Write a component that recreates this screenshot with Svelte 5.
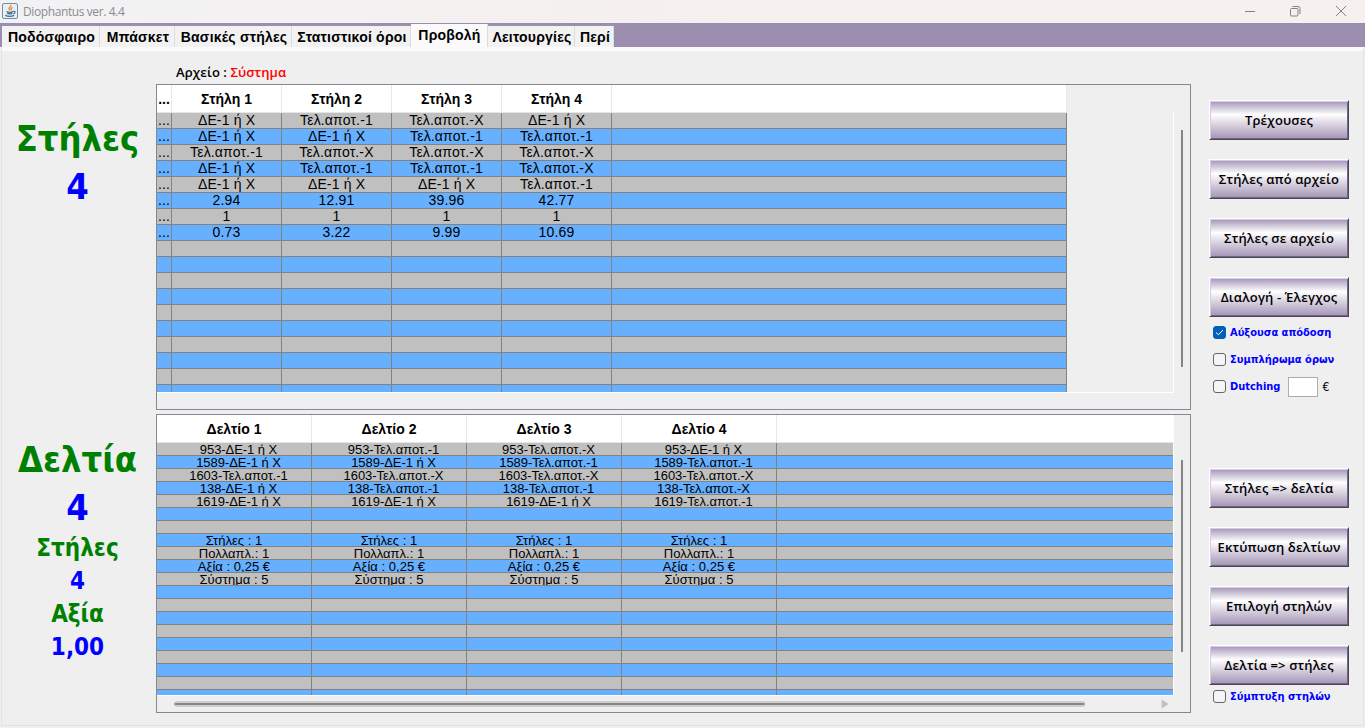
<script>
  let activeTab = 'Προβολή';
  const tabs = [
    { name: 'Ποδόσφαιρο', width: 98 },
    { name: 'Μπάσκετ', width: 75 },
    { name: 'Βασικές στήλες', width: 117 },
    { name: 'Στατιστικοί όροι', width: 119 },
    { name: 'Προβολή', width: 77 },
    { name: 'Λειτουργίες', width: 87 },
    { name: 'Περί', width: 39 }
  ];

  const one = 'Τελ.αποτ.-1';
  const ex = 'Τελ.αποτ.-Χ';
  const dc = 'ΔΕ-1 ή Χ';

  const columns = [
    ['...', dc, one, ex, dc],
    ['...', dc, dc, one, one],
    ['...', one, ex, ex, ex],
    ['...', dc, one, one, ex],
    ['...', dc, dc, dc, one],
    ['...', '2.94', '12.91', '39.96', '42.77'],
    ['...', '1', '1', '1', '1'],
    ['...', '0.73', '3.22', '9.99', '10.69']
  ];

  const codes = ['953', '1589', '1603', '138', '1619'];
  const coupons = [
    ...codes.map((code, i) => columns[i].slice(1).map(pick => code + '-' + pick)),
    [], [],
    ...['Στήλες : 1', 'Πολλαπλ.: 1', 'Αξία : 0,25 €', 'Σύστημα : 5'].map(t => [t, t, t, t])
  ];

  const pad = (rows, count) => Array.from({ length: count }, (_, i) => rows[i] || []);

  const tables = [
    { id: 'columns', widths: [15, 110, 110, 110, 110, 455], heads: ['...', 'Στήλη 1', 'Στήλη 2', 'Στήλη 3', 'Στήλη 4', ''], rows: pad(columns, 18) },
    { id: 'coupons', widths: [155, 155, 155, 155, 400], heads: ['Δελτίο 1', 'Δελτίο 2', 'Δελτίο 3', 'Δελτίο 4', ''], rows: pad(coupons, 20) }
  ];

  const topButtons = ['Τρέχουσες', 'Στήλες από αρχείο', 'Στήλες σε αρχείο', 'Διαλογή - Έλεγχος'];
  const bottomButtons = ['Στήλες => δελτία', 'Εκτύπωση δελτίων', 'Επιλογή στηλών', 'Δελτία => στήλες'];

  let ascending = true;
  let complement = false;
  let dutching = false;
  let collapse = false;
</script>

<div class="window">
  <header class="titlebar">
    <svg class="java" width="16" height="16" viewBox="0 0 16 16">
      <rect x=".5" y=".5" width="15" height="15" rx="1.5" fill="#e9f0f5" stroke="#6f8ea5" />
      <path d="M8.6 1.8c1.4 2-3.4 2.8-.9 5.4M10.6 4.3c-2.4 1-1.7 1.8-1.2 3.2" fill="none" stroke="#e8892f" stroke-width="1.3" />
      <path d="M4.5 8.6c2 .8 5 .7 6.5 0M5.2 10.4c1.7.6 3.7.6 5.2 0M3.2 12.4c2.8 1.2 6.6 1 9 0M11.3 8.4c2.6-.4 2.2 2 .1 2.5" fill="none" stroke="#3f6f96" stroke-width="1.2" />
    </svg>
    <span class="title">Diophantus ver. 4.4</span>
    <svg class="controls" width="104" height="14" viewBox="0 0 104 14" fill="none" stroke="#858282">
      <path d="M1 7.5h10" />
      <path d="M46.5 5.5q0-1 1-1h5.5q1 0 1 1v5.5q0 1-1 1h-5.5q-1 0-1-1zM48.5 2.5h5.5q2 0 2 2v5.5" />
      <path d="M92 2l10 10M102 2l-10 10" />
    </svg>
  </header>

  <nav>
    {#each tabs as tab}
      <button class="tab" class:active={tab.name === activeTab} style="width: {tab.width}px" on:click={() => activeTab = tab.name}>{tab.name}</button>
    {/each}
  </nav>

  <main>
    <aside class="totals">
      <div class="big">Στήλες</div>
      <div class="big value">4</div>
      <div class="big second">Δελτία</div>
      <div class="big value">4</div>
      <div class="small">Στήλες</div>
      <div class="small value">4</div>
      <div class="small">Αξία</div>
      <div class="small value">1,00</div>
    </aside>

    <section class="center">
      <div class="file">Αρχείο : <span>Σύστημα</span></div>
      {#each tables as table}
        <div class="pane {table.id}">
          <div class="viewport">
            <div class="row head">
              {#each table.heads as head, i}
                <div class="cell" style="width: {table.widths[i]}px">{head}</div>
              {/each}
            </div>
            <div class="body">
              {#each table.rows as row, r}
                <div class="row" class:pick={r < codes.length}>
                  {#each table.widths as width, i}
                    <div class="cell" style="width: {width}px">{row[i] || ''}</div>
                  {/each}
                </div>
              {/each}
            </div>
          </div>
          <div class="vscroll"></div>
          {#if table.id === 'coupons'}
            <div class="hscroll">
              <div class="thumb"></div>
              <svg width="8" height="10" viewBox="0 0 8 10"><path d="M1 1l6 4-6 4z" fill="#bfbfbf" stroke="#c8c8c8" stroke-linejoin="round" /></svg>
            </div>
          {/if}
        </div>
      {/each}
    </section>

    <aside class="actions">
      {#each topButtons as label}
        <button class="action">{label}</button>
      {/each}
      <div class="options">
        <label><input type="checkbox" bind:checked={ascending}><span class="box"><svg width="9" height="7" viewBox="0 0 9 7"><path d="M1 3.5l2.5 2.2L8 1" fill="none" stroke="#fff" /></svg></span>Αύξουσα απόδοση</label>
        <label><input type="checkbox" bind:checked={complement}><span class="box"></span>Συμπλήρωμα όρων</label>
        <div class="dutching">
          <label><input type="checkbox" bind:checked={dutching}><span class="box"></span>Dutching</label>
          <input class="amount" type="text">
          <span>€</span>
        </div>
      </div>
      {#each bottomButtons as label}
        <button class="action">{label}</button>
      {/each}
      <label class="collapse"><input type="checkbox" bind:checked={collapse}><span class="box"></span>Σύμπτυξη στηλών</label>
    </aside>
  </main>
</div>

<style>
  :global(body) {
    margin: 0;
    overflow: hidden;
  }

  .window {
    display: flex;
    flex-direction: column;
    width: 1365px;
    height: 728px;
    background: #efefef;
    color: #000;
    font-family: "Liberation Sans", Arial, sans-serif;
  }

  button {
    margin: 0;
    padding: 0;
    white-space: nowrap;
    color: #000;
  }

  .titlebar {
    display: flex;
    align-items: center;
    box-sizing: border-box;
    height: 23px;
    padding: 0 17px 1px 2px;
    background: linear-gradient(90deg, #f2f2f4, #f6f0ef 55%);
  }

  .title {
    margin-left: 5px;
    font: 12px "Open Sans", "Noto Sans", sans-serif;
    letter-spacing: -0.4px;
    color: #8c8c8e;
  }

  .controls {
    margin-left: auto;
  }

  nav {
    display: flex;
    align-items: flex-end;
    box-sizing: border-box;
    height: 24px;
    padding-left: 2px;
    background: #9c8eae;
  }

  .tab {
    box-sizing: border-box;
    height: 21px;
    padding-left: 2px;
    border: 0;
    border-right: 1px solid #dcdcdc;
    background: #f2f2f2;
    font: bold 14px "Liberation Sans", Arial, sans-serif;
    letter-spacing: 0.22px;
  }

  .tab.active {
    height: 23px;
    padding: 0 0 1px 1px;
    background: #fafafa;
  }

  main {
    display: flex;
    box-sizing: border-box;
    height: 679px;
    margin: 0 1px;
    border: 1px solid #e2e2e2;
    border-top: 4px solid #fafafa;
  }

  .totals {
    width: 151px;
    margin-right: 3px;
    padding-top: 64px;
    text-align: center;
    font-family: "DejaVu Sans Condensed", "DejaVu Sans", sans-serif;
    font-stretch: condensed;
    font-weight: bold;
    color: #008000;
  }

  .big {
    height: 48px;
    line-height: 48px;
    font-size: 36px;
  }

  .second {
    margin-top: 225px;
  }

  .small {
    height: 33px;
    line-height: 33px;
    font-size: 24px;
  }

  .value {
    color: #0000ff;
  }

  .center {
    width: 1035px;
  }

  .file {
    height: 33px;
    padding-left: 20px;
    box-sizing: border-box;
    padding-top: 12px;
    font: 600 13px/18px "Open Sans", "Noto Sans", sans-serif;
    letter-spacing: 0.08px;
  }

  .file span {
    color: #ff0000;
  }

  .pane {
    display: grid;
    grid-template-columns: 1017px 16px;
    box-sizing: border-box;
    height: 326px;
    border: 1px solid #838993;
  }

  .pane.coupons {
    height: 299px;
    margin-top: 4px;
  }

  .viewport {
    height: 307px;
    overflow: hidden;
    border-bottom: 1px solid #fff;
  }

  .coupons .viewport {
    height: 280px;
  }

  .body {
    box-sizing: border-box;
    height: 100%;
    overflow: hidden;
    border-right: 1px solid #fff;
  }

  .row {
    display: flex;
    width: max-content;
  }

  .cell {
    flex: none;
    box-sizing: border-box;
    height: 16px;
    overflow: hidden;
    border-right: 1px solid #828282;
    border-bottom: 1px solid #828282;
    background: #c0c0c0;
    text-align: center;
    white-space: nowrap;
    font-size: 14px;
    line-height: 15px;
    letter-spacing: 0.15px;
  }

  .row:nth-child(even) .cell {
    background: #66b0ff;
  }

  .coupons .cell {
    height: 13px;
    font-size: 13px;
    line-height: 13px;
    letter-spacing: 0.03px;
  }

  .coupons .pick .cell {
    padding-left: 9px;
    letter-spacing: -0.05px;
  }

  .row.head .cell {
    height: 28px;
    border-right: 1px solid #e8e8e8;
    border-bottom: 1px solid #e5e5e5;
    background: #fff;
    font-size: 14px;
    font-weight: bold;
    line-height: 28px;
    letter-spacing: 0;
  }

  .vscroll {
    width: 2px;
    height: 237px;
    margin: 45px 0 0 7px;
    background: #858585;
  }

  .coupons .vscroll {
    height: 192px;
  }

  .hscroll {
    display: flex;
    align-items: center;
    height: 16px;
    padding-left: 17px;
  }

  .thumb {
    width: 911px;
    height: 2px;
    margin-right: 76px;
    border: solid #cecece;
    border-width: 2px 0;
    border-radius: 3px;
    background: #858585;
  }

  .hscroll svg {
    flex: none;
  }

  .actions {
    width: 154px;
    padding: 49px 0 0 18px;
  }

  .action {
    display: block;
    box-sizing: border-box;
    width: 140px;
    height: 40px;
    margin-bottom: 19px;
    border: 1px solid;
    border-color: #fff #4d445c #4d445c #fff;
    box-shadow: inset 1px 1px #d9c8ee, inset -1px -1px #716683;
    background: linear-gradient(#a294b4, #fff 36%, #f3f0f5 44%, #a294b4);
    font: 600 13px "Open Sans", "Noto Sans", sans-serif;
    letter-spacing: 0.15px;
  }

  .options {
    height: 149px;
    margin-top: -17px;
  }

  label {
    display: flex;
    align-items: center;
    height: 27px;
    padding-left: 4px;
    white-space: nowrap;
    font: bold 11px "DejaVu Sans Condensed", "DejaVu Sans", sans-serif;
    font-stretch: condensed;
    color: #0000ff;
  }

  input[type="checkbox"] {
    position: absolute;
    opacity: 0;
    pointer-events: none;
  }

  .box {
    display: flex;
    align-items: center;
    justify-content: center;
    box-sizing: border-box;
    width: 13px;
    height: 13px;
    margin-right: 4px;
    border: 1px solid #666;
    border-radius: 3px;
    background: #f5f5f5;
  }

  input:checked + .box {
    border-color: #005fb8;
    background: #005fb8;
  }

  .dutching {
    display: flex;
    align-items: center;
    font: 12px "DejaVu Sans Condensed", "DejaVu Sans", sans-serif;
  }

  .amount {
    box-sizing: border-box;
    width: 30px;
    height: 20px;
    margin: 0 4px 0 8px;
    border: 1px solid #abadb3;
    background: #fff;
  }

  .collapse {
    margin-top: -21px;
  }
</style>
